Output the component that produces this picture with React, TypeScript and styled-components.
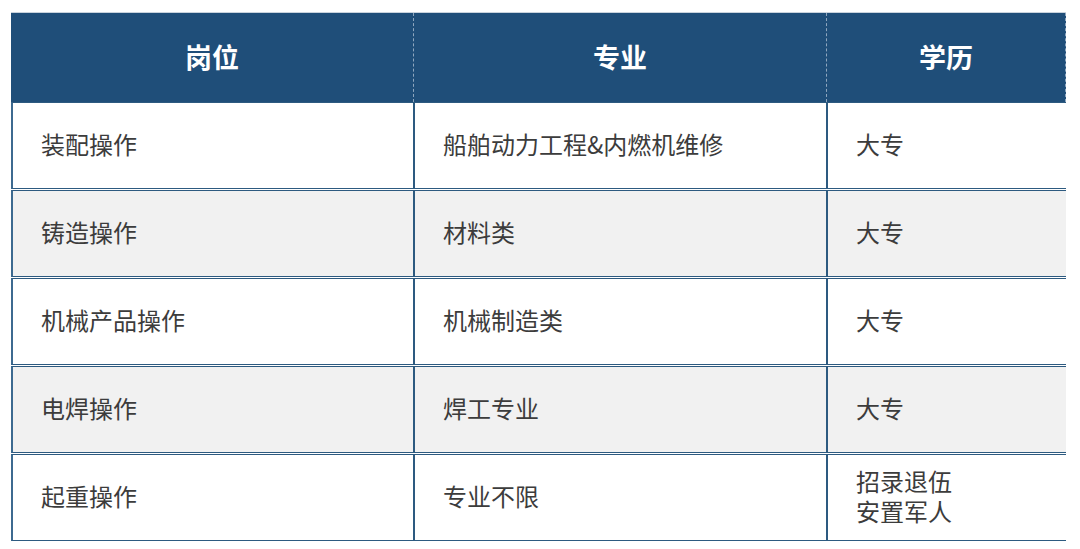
import styled, { createGlobalStyle } from 'styled-components'

const GlobalStyle = createGlobalStyle`
  html, body {
    margin: 0;
    padding: 0;
    background: #fff;
  }
  body {
    font-family: 'Noto Sans CJK SC', 'Noto Sans', sans-serif;
  }
`

const rows = [
  { post: '装配操作', major: '船舶动力工程&内燃机维修', edu: ['大专'] },
  { post: '铸造操作', major: '材料类', edu: ['大专'] },
  { post: '机械产品操作', major: '机械制造类', edu: ['大专'] },
  { post: '电焊操作', major: '焊工专业', edu: ['大专'] },
  { post: '起重操作', major: '专业不限', edu: ['招录退伍', '安置军人'] },
]

const App = () => {
  return (
    <>
      <GlobalStyle />
      <Page>
        <Table>
          <Header>
            <HeadCell>岗位</HeadCell>
            <HeadCell $divider>专业</HeadCell>
            <HeadCell $divider $last>学历</HeadCell>
          </Header>
          {rows.map((row, index) => (
            <Row key={index} $gray={index % 2 === 1} $first={index === 0}>
              <Cell>{row.post}</Cell>
              <Cell $divider>{row.major}</Cell>
              <Cell $divider>
                <Lines>
                  {row.edu.map((line) => (
                    <span key={line}>{line}</span>
                  ))}
                </Lines>
              </Cell>
            </Row>
          ))}
        </Table>
      </Page>
    </>
  )
}

export default App

const Page = styled.div`
  width: 1080px;
  height: 549px;
  padding: 12px 0 0 11px;
  box-sizing: border-box;
  overflow: hidden;
`

const Table = styled.div`
  width: 1055px;
  display: flex;
  flex-direction: column;
`

const Header = styled.div`
  display: grid;
  grid-template-columns: 402px 413px 1fr;
  height: 90px;
  background: #1f4e79;
  border-top: 1px solid #c9d3dd;
  box-sizing: border-box;
`

const HeadCell = styled.div<{ $divider?: boolean; $last?: boolean }>`
  display: flex;
  align-items: center;
  justify-content: center;
  color: #fff;
  font-size: 27px;
  font-weight: 700;
  border-left: ${(p) => (p.$divider ? '1px dashed #8fa7bf' : 'none')};
  border-right: ${(p) => (p.$last ? '1px dashed #8fa7bf' : 'none')};
  padding-bottom: 3px;
`

const Row = styled.div<{ $gray?: boolean; $first?: boolean }>`
  display: grid;
  grid-template-columns: 400px 413px 1fr;
  height: 87px;
  margin-top: ${(p) => (p.$first ? '0' : '1px')};
  background: ${(p) => (p.$gray ? '#f1f1f1' : '#fff')};
  border-top: 1.5px solid #2d5a80;
  border-bottom: 1.5px solid #2d5a80;
  border-left: 2px solid #3d6a90;
  box-sizing: border-box;
`

const Cell = styled.div<{ $divider?: boolean }>`
  display: flex;
  align-items: center;
  padding-left: 28px;
  padding-bottom: 4px;
  border-left: ${(p) => (p.$divider ? '2px solid #2d5a80' : 'none')};
  color: #3c3c3c;
  font-size: 24px;
  white-space: nowrap;
`

const Lines = styled.div`
  display: flex;
  flex-direction: column;
  line-height: 30px;
`
